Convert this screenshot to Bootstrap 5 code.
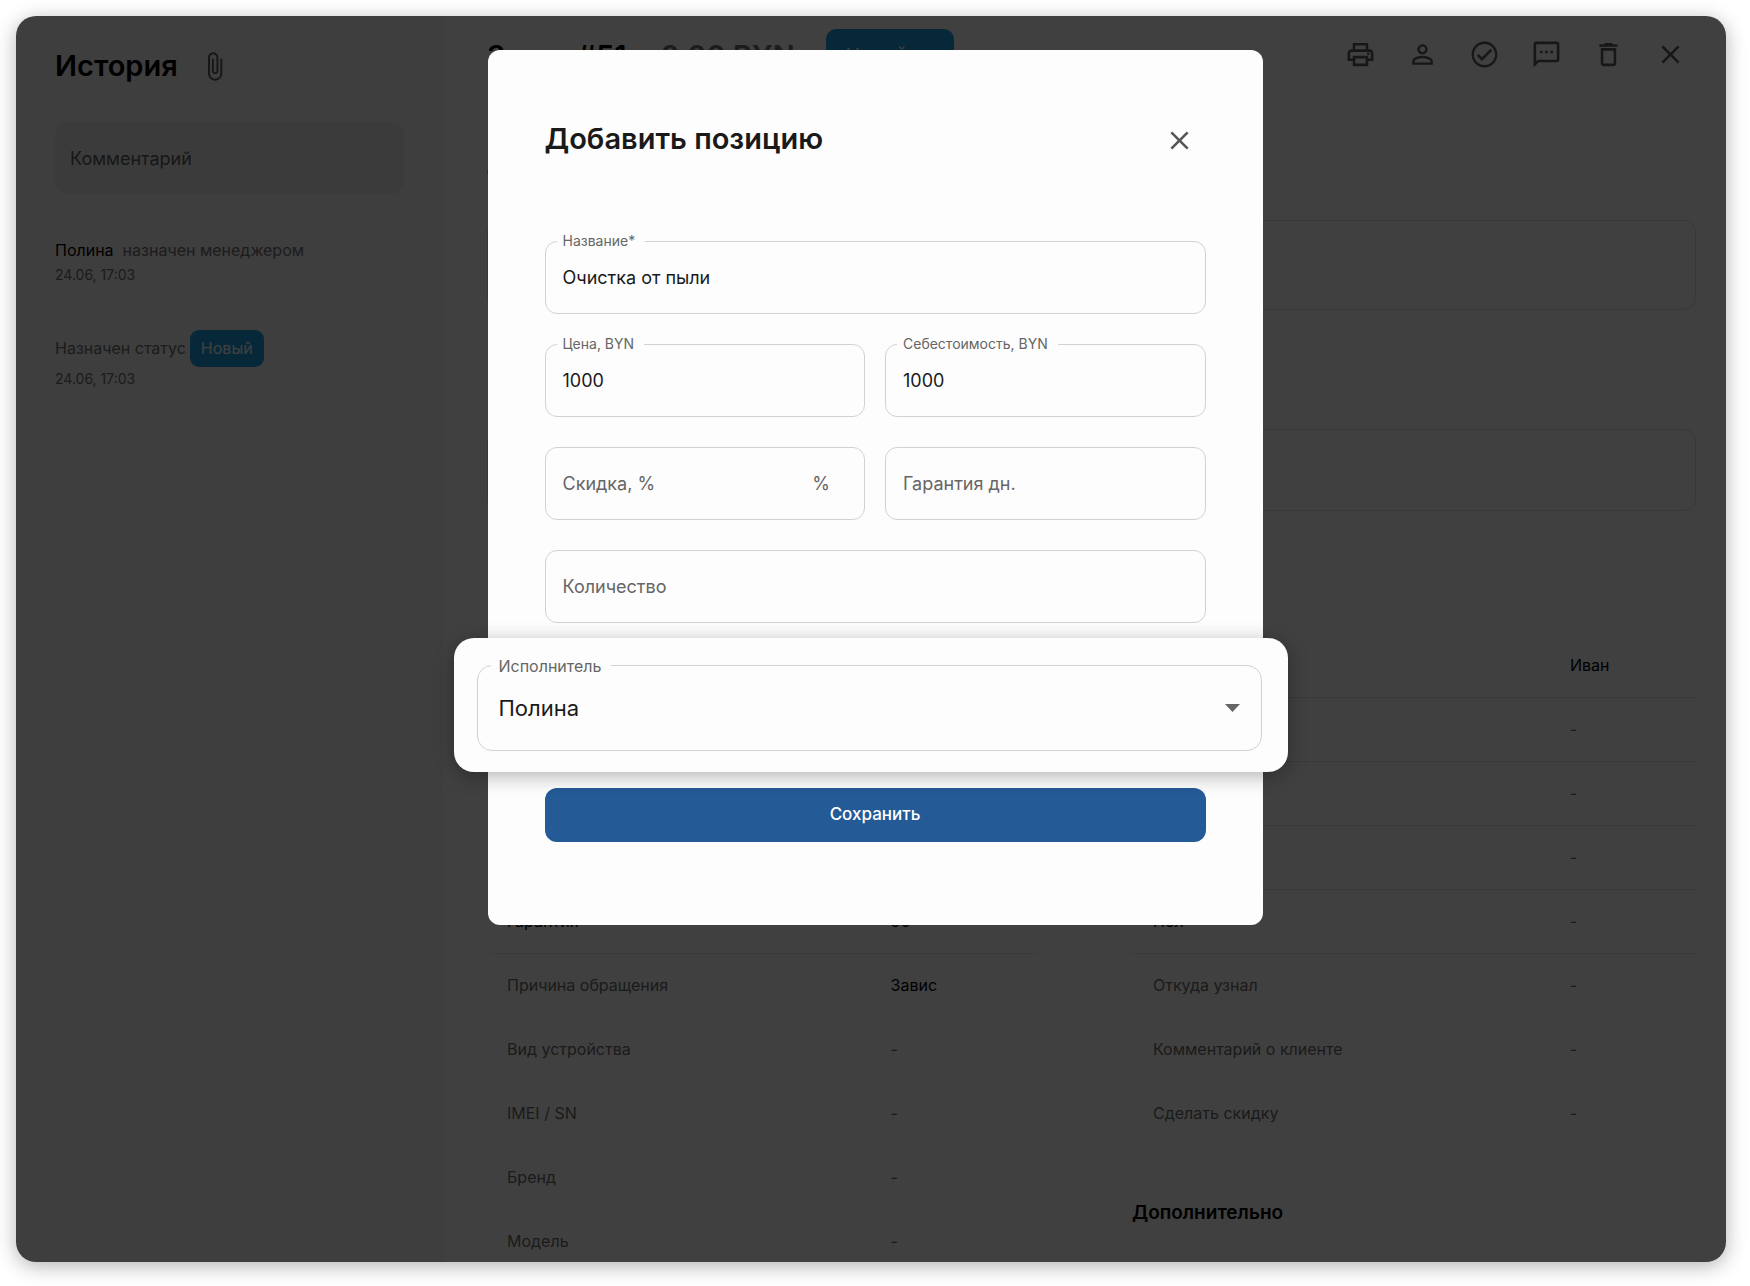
<!DOCTYPE html>
<html lang="ru">
<head>
<meta charset="utf-8">
<meta name="viewport" content="width=device-width, initial-scale=1">
<title>Добавить позицию</title>
<link href="https://cdn.jsdelivr.net/npm/bootstrap@5.3.0/dist/css/bootstrap.min.css" rel="stylesheet">
<style>
  body { font-family: Inter, "Noto Sans", sans-serif; background: #fff; color: #000; }
  .stage { padding: 16px 24px 24px 16px; height: 100vh; }
  .window { height: 100%; border-radius: 20px; overflow: hidden; box-shadow: 0 4px 20px rgba(0,0,0,.3); background: #fff; }
  .shade { background: rgba(0,0,0,.75); z-index: 1; }
  h1, h2, h3 { font-weight: 600; margin: 0; }

  .history { flex: 0 0 427px; background: #f6f6f6; padding: 32px 39px; }
  .history-head { gap: 21px; }
  .history h2 { font-size: 29px; line-height: 36px; }
  .icon { width: 31px; height: 31px; fill: currentColor; display: block; }
  .icon-button { border: 0; background: none; padding: 0; color: #5c5c5c; }
  .comment { height: 72px; margin-top: 38px; border: 0; border-radius: 12px; background: #ebebeb; padding: 0 15px; font-size: 18px; color: #000; }
  .comment::placeholder { color: #5c5c5c; opacity: 1; }
  .event { font-size: 16px; line-height: 26px; color: #707070; margin-top: 43px; }
  .event time { display: block; font-size: 14px; line-height: 24px; }
  .status { background: #1ea1e0; color: #fff; border: 0; border-radius: 9px; font-weight: 400; }
  .status-small { display: inline-block; padding: 5px 11px; line-height: 27px; margin-left: 4px; }
  .status-large { width: 128px; height: 54px; font-size: 19px; text-align: left; padding: 0 20px; border-radius: 10px; margin-left: 31px; }

  .order { padding: 13px 30px 0 44px; }
  .order-head { height: 54px; }
  .order-head h1 { font-size: 29px; line-height: 36px; }
  .order-head .price { color: #707070; margin-left: 34px; }
  .tools { gap: 31px; padding-right: 10px; height: 51px; }
  .order h3 { font-size: 19px; line-height: 28px; }
  .goods-title { margin-top: 68px; }
  .empty-box { border: 1px solid #dedede; border-radius: 12px; }
  .goods-box { height: 90px; margin-top: 41px; }
  .notes-title { margin-top: 56px; }
  .notes-box { height: 82px; margin-top: 35px; }
  .info-title { margin-top: 64px; }
  .info { gap: 94px; margin: 30px 0 0 3px; }
  .info-left { flex: 0 0 548px; }
  .facts { width: 100%; table-layout: fixed; font-size: 16px; line-height: 24px; }
  .facts th { width: 70%; font-weight: 400; color: #6c6c6c; }
  .facts th, .facts td { height: 64px; padding: 0 0 0 17px; border-bottom: 1px solid #e8e8e8; }
  .info-right .facts th { width: 75%; padding-left: 21px; }
  .info-right .facts td { padding-left: 15px; }
  .facts td { color: #6c6c6c; }
  .facts .filled { color: #000; }
  .facts .plain th, .facts .plain td { border-color: transparent; }
  .more-title { margin-top: 53px; }

  .dialog-layer { z-index: 2; padding-top: 50px; }
  .item-dialog { width: 775px; border-radius: 12px; background: #fdfdfd; padding: 70px 57px 83px; color: #1a1a1a; }
  .item-dialog h2 { font-size: 29px; line-height: 38px; padding-bottom: 2px; }
  .item-dialog .icon-button { color: #555; margin-right: 11px; }
  .item-form { margin-top: 81px; }
  .field-grid { display: grid; grid-template-columns: 1fr 1fr; gap: 30px 20px; }
  .wide { grid-column: 1 / -1; }
  .outlined { position: relative; height: 73px; border: 1px solid #d2d2d2; border-radius: 12px; display: flex; align-items: center; padding: 0 34px 0 17px; }
  .outlined label { position: absolute; top: -11px; left: 11px; padding: 0 10px 0 6px; font-size: 14px; line-height: 20px; background: #fdfdfd; color: #666; }
  .outlined input, .outlined select { flex: 1; min-width: 0; width: 100%; height: 100%; border: 0; background: none; padding: 0; font-size: 18px; color: #1a1a1a; outline: 0; appearance: none; }
  .outlined input::placeholder { color: #666; opacity: 1; }
  .suffix { font-size: 18px; color: #666; }
  .spotlight { position: relative; margin: 15px -82px 16px -91px; padding: 27px 26px 21px 23px; border-radius: 20px; background: #fdfdfd; box-shadow: 0 4px 20px rgba(0,0,0,.3); }
  .spotlight .outlined { height: 86px; border-radius: 15px; padding: 0 20px 0 21px; }
  .spotlight .outlined label { left: 13px; padding: 0 10px 0 8px; font-size: 16px; line-height: 22px; }
  .spotlight select { font-size: 22px; }
  .caret { position: absolute; right: 21px; width: 15px; height: 8px; fill: #666; pointer-events: none; }
  .save { height: 54px; border: 0; border-radius: 12px; background: #245a96; color: #fff; font-size: 17px; font-weight: 500; }
</style>
<script src="https://cdn.jsdelivr.net/npm/bootstrap@5.3.0/dist/js/bootstrap.bundle.min.js"></script>
</head>
<body>
<div class="stage">
  <div class="window position-relative d-flex">
    <aside class="history">
      <div class="history-head d-flex align-items-center">
        <h2>История</h2>
        <button class="icon-button" type="button" aria-label="Прикрепить файл">
          <svg class="icon" viewBox="0 0 24 24"><path d="M16.5 6v11.5c0 2.21-1.79 4-4 4s-4-1.79-4-4V5c0-1.38 1.12-2.5 2.5-2.5s2.5 1.12 2.5 2.5v10.5c0 .55-.45 1-1 1s-1-.45-1-1V6H10v9.5c0 1.38 1.12 2.5 2.5 2.5s2.5-1.12 2.5-2.5V5c0-2.21-1.79-4-4-4S7 2.79 7 5v12.5c0 3.04 2.46 5.5 5.5 5.5s5.5-2.46 5.5-5.5V6h-1.5z"/></svg>
        </button>
      </div>
      <input class="comment w-100" type="text" placeholder="Комментарий" aria-label="Комментарий">
      <div class="event"><span class="text-black">Полина</span>&nbsp; назначен менеджером<time>24.06, 17:03</time></div>
      <div class="event">Назначен статус<span class="status status-small">Новый</span><time>24.06, 17:03</time></div>
    </aside>

    <main class="order flex-grow-1">
      <header class="d-flex justify-content-between">
        <div class="order-head d-flex align-items-center">
          <h1>Заказ #51</h1><h1 class="price">0.00 BYN</h1>
          <button class="status status-large" type="button">Новый</button>
        </div>
        <div class="tools d-flex align-items-center">
          <button class="icon-button" type="button" aria-label="Печать"><svg class="icon" viewBox="0 0 24 24"><path d="M19 8h-1V3H6v5H5c-1.66 0-3 1.34-3 3v6h4v4h12v-4h4v-6c0-1.66-1.34-3-3-3zM8 5h8v3H8V5zm8 12v2H8v-4h8v2zm2-2v-2H6v2H4v-4c0-.55.45-1 1-1h14c.55 0 1 .45 1 1v4h-2z"/><circle cx="18" cy="11.5" r="1"/></svg></button>
          <button class="icon-button" type="button" aria-label="Клиент"><svg class="icon" viewBox="0 0 24 24"><path d="M12 5.9c1.16 0 2.1.94 2.1 2.1s-.94 2.1-2.1 2.1S9.900 9.160 9.900 8s.94-2.100 2.100-2.100m0 9c2.970 0 6.100 1.460 6.100 2.100v1.100H5.900V17c0-.64 3.130-2.100 6.100-2.100M12 4C9.790 4 8 5.790 8 8s1.790 4 4 4 4-1.790 4-4-1.790-4-4-4zm0 9c-2.670 0-8 1.340-8 4v3h16v-3c0-2.660-5.330-4-8-4z"/></svg></button>
          <button class="icon-button" type="button" aria-label="Завершить"><svg class="icon" viewBox="0 0 24 24"><path d="M12 2C6.480 2 2 6.480 2 12s4.480 10 10 10 10-4.480 10-10S17.520 2 12 2zm0 18.200c-4.520 0-8.200-3.680-8.200-8.200S7.480 3.800 12 3.800s8.200 3.680 8.200 8.200-3.680 8.200-8.200 8.200zm4.590-12.620L10 14.170l-2.590-2.580L6 13l4 4 8-8-1.410-1.420z"/></svg></button>
          <button class="icon-button" type="button" aria-label="Сообщение"><svg class="icon" viewBox="0 0 24 24"><path d="M20 2H4c-1.100 0-2 .9-2 2v18l4-4h14c1.100 0 2-.9 2-2V4c0-1.100-.9-2-2-2zm0 14H5.170L4 17.170V4h16v12zM7 9h2v2H7zm4 0h2v2h-2zm4 0h2v2h-2z"/></svg></button>
          <button class="icon-button" type="button" aria-label="Удалить"><svg class="icon" viewBox="0 0 24 24"><path d="M6 19c0 1.100.9 2 2 2h8c1.100 0 2-.9 2-2V7H6v12zM8 9h8v10H8V9zm7.500-5l-1-1h-5l-1 1H5v2h14V4h-3.500z"/></svg></button>
          <button class="icon-button" type="button" aria-label="Закрыть заказ"><svg class="icon" viewBox="0 0 24 24"><path d="M19 6.410L17.590 5 12 10.590 6.410 5 5 6.410 10.590 12 5 17.590 6.410 19 12 13.410 17.590 19 19 17.590 13.410 12z"/></svg></button>
        </div>
      </header>

      <h3 class="goods-title">Детали</h3>
      <div class="empty-box goods-box"></div>
      <h3 class="notes-title">Позиции</h3>
      <div class="empty-box notes-box"></div>
      <h3 class="info-title">Инфо</h3>

      <div class="info d-flex align-items-start">
        <section class="info-left">
          <table class="facts">
            <tr><th scope="row"></th><td></td></tr>
            <tr><th scope="row"></th><td></td></tr>
            <tr><th scope="row"></th><td></td></tr>
            <tr><th scope="row"></th><td></td></tr>
            <tr><th scope="row" class="filled">Гарантия</th><td class="filled">90</td></tr>
            <tr class="plain"><th scope="row">Причина обращения</th><td class="filled">Завис</td></tr>
            <tr class="plain"><th scope="row">Вид устройства</th><td>-</td></tr>
            <tr class="plain"><th scope="row">IMEI / SN</th><td>-</td></tr>
            <tr class="plain"><th scope="row">Бренд</th><td>-</td></tr>
            <tr class="plain"><th scope="row">Модель</th><td>-</td></tr>
          </table>
        </section>
        <section class="info-right flex-grow-1">
          <table class="facts">
            <tr><th scope="row">Имя</th><td class="filled">Иван</td></tr>
            <tr><th scope="row">Телефон</th><td>-</td></tr>
            <tr><th scope="row">Email</th><td>-</td></tr>
            <tr><th scope="row">Адрес</th><td>-</td></tr>
            <tr><th scope="row" class="filled">Пол</th><td>-</td></tr>
            <tr class="plain"><th scope="row">Откуда узнал</th><td>-</td></tr>
            <tr class="plain"><th scope="row">Комментарий о клиенте</th><td>-</td></tr>
            <tr class="plain"><th scope="row">Сделать скидку</th><td>-</td></tr>
          </table>
          <h3 class="more-title">Дополнительно</h3>
        </section>
      </div>
    </main>
    <div class="shade position-absolute top-0 start-0 w-100 h-100"></div>
  </div>
</div>

<div class="dialog-layer position-absolute top-0 start-0 w-100 d-flex justify-content-center">
  <div class="item-dialog" role="dialog" aria-labelledby="dialog-title">
    <div class="d-flex justify-content-between align-items-center">
      <h2 id="dialog-title">Добавить позицию</h2>
      <button class="icon-button" type="button" aria-label="Закрыть"><svg class="icon" viewBox="0 0 24 24"><path d="M19 6.410L17.590 5 12 10.590 6.410 5 5 6.410 10.590 12 5 17.590 6.410 19 12 13.410 17.590 19 19 17.590 13.410 12z"/></svg></button>
    </div>
    <form class="item-form">
      <div class="field-grid">
        <div class="outlined wide"><label for="name">Название*</label><input id="name" type="text" value="Очистка от пыли"></div>
        <div class="outlined"><label for="price">Цена, BYN</label><input id="price" type="text" value="1000"></div>
        <div class="outlined"><label for="cost">Себестоимость, BYN</label><input id="cost" type="text" value="1000"></div>
        <div class="outlined"><input type="text" placeholder="Скидка, %" aria-label="Скидка, %"><span class="suffix">%</span></div>
        <div class="outlined"><input type="text" placeholder="Гарантия дн." aria-label="Гарантия дн."></div>
        <div class="outlined wide"><input type="text" placeholder="Количество" aria-label="Количество"></div>
      </div>
      <div class="spotlight">
        <div class="outlined">
          <label for="worker">Исполнитель</label>
          <select id="worker"><option>Полина</option></select>
          <svg class="caret" viewBox="0 0 15 8"><path d="M0 0h15L7.500 8z"/></svg>
        </div>
      </div>
      <button class="save w-100 d-block" type="button">Сохранить</button>
    </form>
  </div>
</div>
</body>
</html>
